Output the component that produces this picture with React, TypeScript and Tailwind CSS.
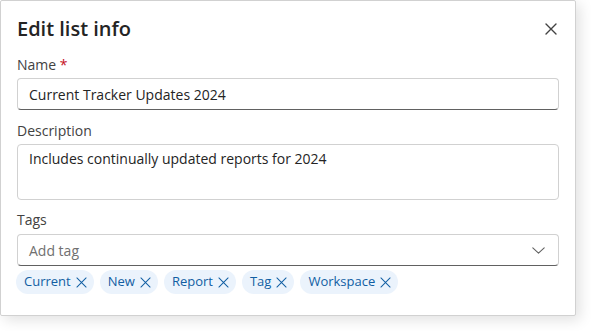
import React from "react";

const XIcon = ({ size = 12, stroke = 1.2 }: { size?: number; stroke?: number }) => (
  <svg width={size} height={size} viewBox="0 0 12 12" fill="none" stroke="currentColor" strokeWidth={stroke} strokeLinecap="round">
    <path d="M1 1L11 11M11 1L1 11" />
  </svg>
);

const tags = ["Current", "New", "Report", "Tag", "Workspace"];

export default function App() {
  return (
    <div className="w-[591px] h-[331px] bg-white" style={{ fontFamily: '"Open Sans", "Noto Sans", sans-serif' }}>
      <div className="w-[576px] h-[316px] bg-white border border-[#d1d1d1] rounded-[2px] shadow-[4px_4px_14px_rgba(0,0,0,0.12)] px-[16px] pt-[13px] flex flex-col">
        <div className="flex items-center justify-between h-[30px]">
          <div className="text-[20px] font-semibold text-[#242424] leading-[30px]">Edit list info</div>
          <button className="text-[#424242] w-[20px] h-[20px] flex items-center justify-center mr-[-2px]">
            <XIcon size={12} stroke={1.4} />
          </button>
        </div>

        <div className="mt-[11px] text-[14px] leading-[20px] text-[#424242]">
          Name <span className="text-[#c50f1f]">*</span>
        </div>
        <div className="mt-[3px] h-[32px] border border-[#d1d1d1] border-b-[#616161] rounded-[4px] flex items-center px-[11px] text-[14px] text-[#242424]">
          Current Tracker Updates 2024
        </div>

        <div className="mt-[11px] text-[14px] leading-[20px] text-[#424242]">Description</div>
        <div className="mt-[3px] h-[56px] border border-[#d1d1d1] rounded-[4px] px-[11px] pt-[4px] text-[14px] leading-[20px] text-[#242424]">
          Includes continually updated reports for 2024
        </div>

        <div className="mt-[10px] text-[14px] leading-[20px] text-[#424242]">Tags</div>
        <div className="mt-[4px] h-[32px] border border-[#d1d1d1] border-b-[#616161] rounded-[4px] flex items-center justify-between pl-[11px] pr-[13px] text-[14px] text-[#707070]">
          <span>Add tag</span>
          <svg width="13" height="7" viewBox="0 0 13 7" fill="none" stroke="#616161" strokeWidth="1.1" strokeLinecap="round" strokeLinejoin="round">
            <path d="M0.8 0.8L6.5 6.2L12.2 0.8" />
          </svg>
        </div>

        <div className="mt-[4px] ml-[-1px] flex gap-[6px]">
          {tags.map((t) => (
            <div key={t} className="h-[24px] rounded-full bg-[#ebf3fc] text-[#115ea3] text-[13px] flex items-center pl-[8px] pr-[7px] gap-[5px]">
              <span>{t}</span>
              <XIcon size={11} stroke={1.1} />
            </div>
          ))}
        </div>
      </div>
    </div>
  );
}
